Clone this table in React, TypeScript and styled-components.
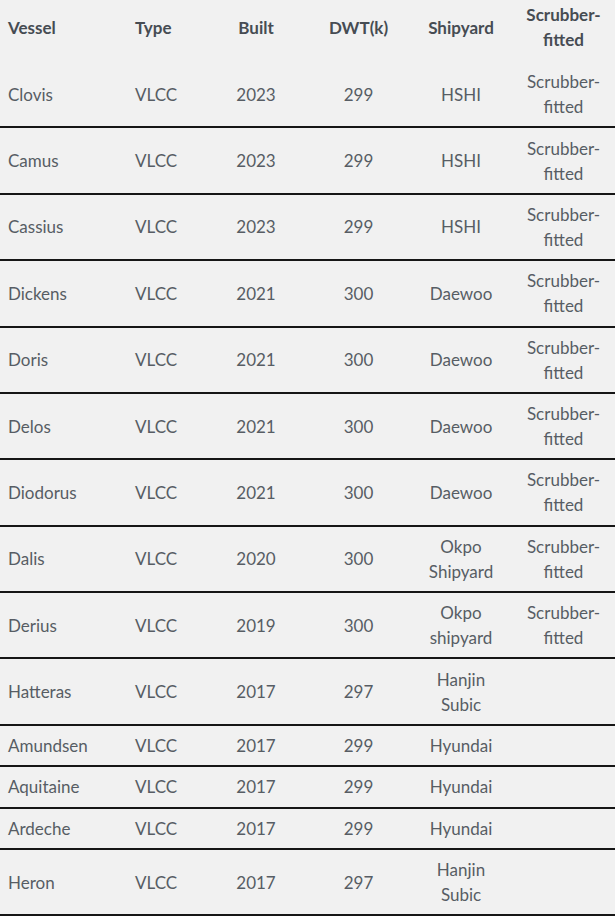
import * as React from 'react';
import styled, {createGlobalStyle} from 'styled-components';

type Vessel = {
  name: string;
  type: string;
  built: number;
  dwt: number;
  shipyard: string;
  scrubber: boolean;
};

const vessels: Vessel[] = [
  {name: 'Clovis', type: 'VLCC', built: 2023, dwt: 299, shipyard: 'HSHI', scrubber: true},
  {name: 'Camus', type: 'VLCC', built: 2023, dwt: 299, shipyard: 'HSHI', scrubber: true},
  {name: 'Cassius', type: 'VLCC', built: 2023, dwt: 299, shipyard: 'HSHI', scrubber: true},
  {name: 'Dickens', type: 'VLCC', built: 2021, dwt: 300, shipyard: 'Daewoo', scrubber: true},
  {name: 'Doris', type: 'VLCC', built: 2021, dwt: 300, shipyard: 'Daewoo', scrubber: true},
  {name: 'Delos', type: 'VLCC', built: 2021, dwt: 300, shipyard: 'Daewoo', scrubber: true},
  {name: 'Diodorus', type: 'VLCC', built: 2021, dwt: 300, shipyard: 'Daewoo', scrubber: true},
  {name: 'Dalis', type: 'VLCC', built: 2020, dwt: 300, shipyard: 'Okpo Shipyard', scrubber: true},
  {name: 'Derius', type: 'VLCC', built: 2019, dwt: 300, shipyard: 'Okpo shipyard', scrubber: true},
  {name: 'Hatteras', type: 'VLCC', built: 2017, dwt: 297, shipyard: 'Hanjin Subic', scrubber: false},
  {name: 'Amundsen', type: 'VLCC', built: 2017, dwt: 299, shipyard: 'Hyundai', scrubber: false},
  {name: 'Aquitaine', type: 'VLCC', built: 2017, dwt: 299, shipyard: 'Hyundai', scrubber: false},
  {name: 'Ardeche', type: 'VLCC', built: 2017, dwt: 299, shipyard: 'Hyundai', scrubber: false},
  {name: 'Heron', type: 'VLCC', built: 2017, dwt: 297, shipyard: 'Hanjin Subic', scrubber: false},
];

const App = () => {
  return (
    <>
      <GlobalStyle />
      <Fleet>
        <colgroup>
          <col style={{width: 127}} />
          <col style={{width: 78}} />
          <col style={{width: 102}} />
          <col style={{width: 103}} />
          <col style={{width: 102}} />
          <col style={{width: 103}} />
        </colgroup>
        <thead>
          <tr>
            <HeadCell>Vessel</HeadCell>
            <HeadCell>Type</HeadCell>
            <HeadCell center>Built</HeadCell>
            <HeadCell center>DWT(k)</HeadCell>
            <HeadCell center>Shipyard</HeadCell>
            <HeadCell center>Scrubber-fitted</HeadCell>
          </tr>
        </thead>
        <tbody>
          {vessels.map((v) => (
            <Row key={v.name}>
              <Cell>{v.name}</Cell>
              <Cell>{v.type}</Cell>
              <Cell center>{v.built}</Cell>
              <Cell center>{v.dwt}</Cell>
              <Cell center>{v.shipyard}</Cell>
              <Cell center>{v.scrubber ? 'Scrubber-fitted' : ''}</Cell>
            </Row>
          ))}
        </tbody>
      </Fleet>
    </>
  );
};

const GlobalStyle = createGlobalStyle`
  html, body {
    margin: 0;
    padding: 0;
    background: #f1f1f1;
  }
  body {
    font-family: Lato, 'Open Sans', sans-serif;
  }
`;

const Fleet = styled.table`
  width: 615px;
  table-layout: fixed;
  border-collapse: collapse;
  font-size: 17px;
  line-height: 25px;
  color: #575d64;
`;

const HeadCell = styled.th<{center?: boolean}>`
  padding: 2px 8px 10px;
  font-weight: 700;
  color: #464c53;
  text-align: ${(props) => props.center ? 'center' : 'left'};
  vertical-align: middle;
`;

const Row = styled.tr`
  border-bottom: 2px solid #161616;
`;

const Cell = styled.td<{center?: boolean}>`
  padding: 7.2px 8px;
  text-align: ${(props) => props.center ? 'center' : 'left'};
  vertical-align: middle;
`;

export default App;
